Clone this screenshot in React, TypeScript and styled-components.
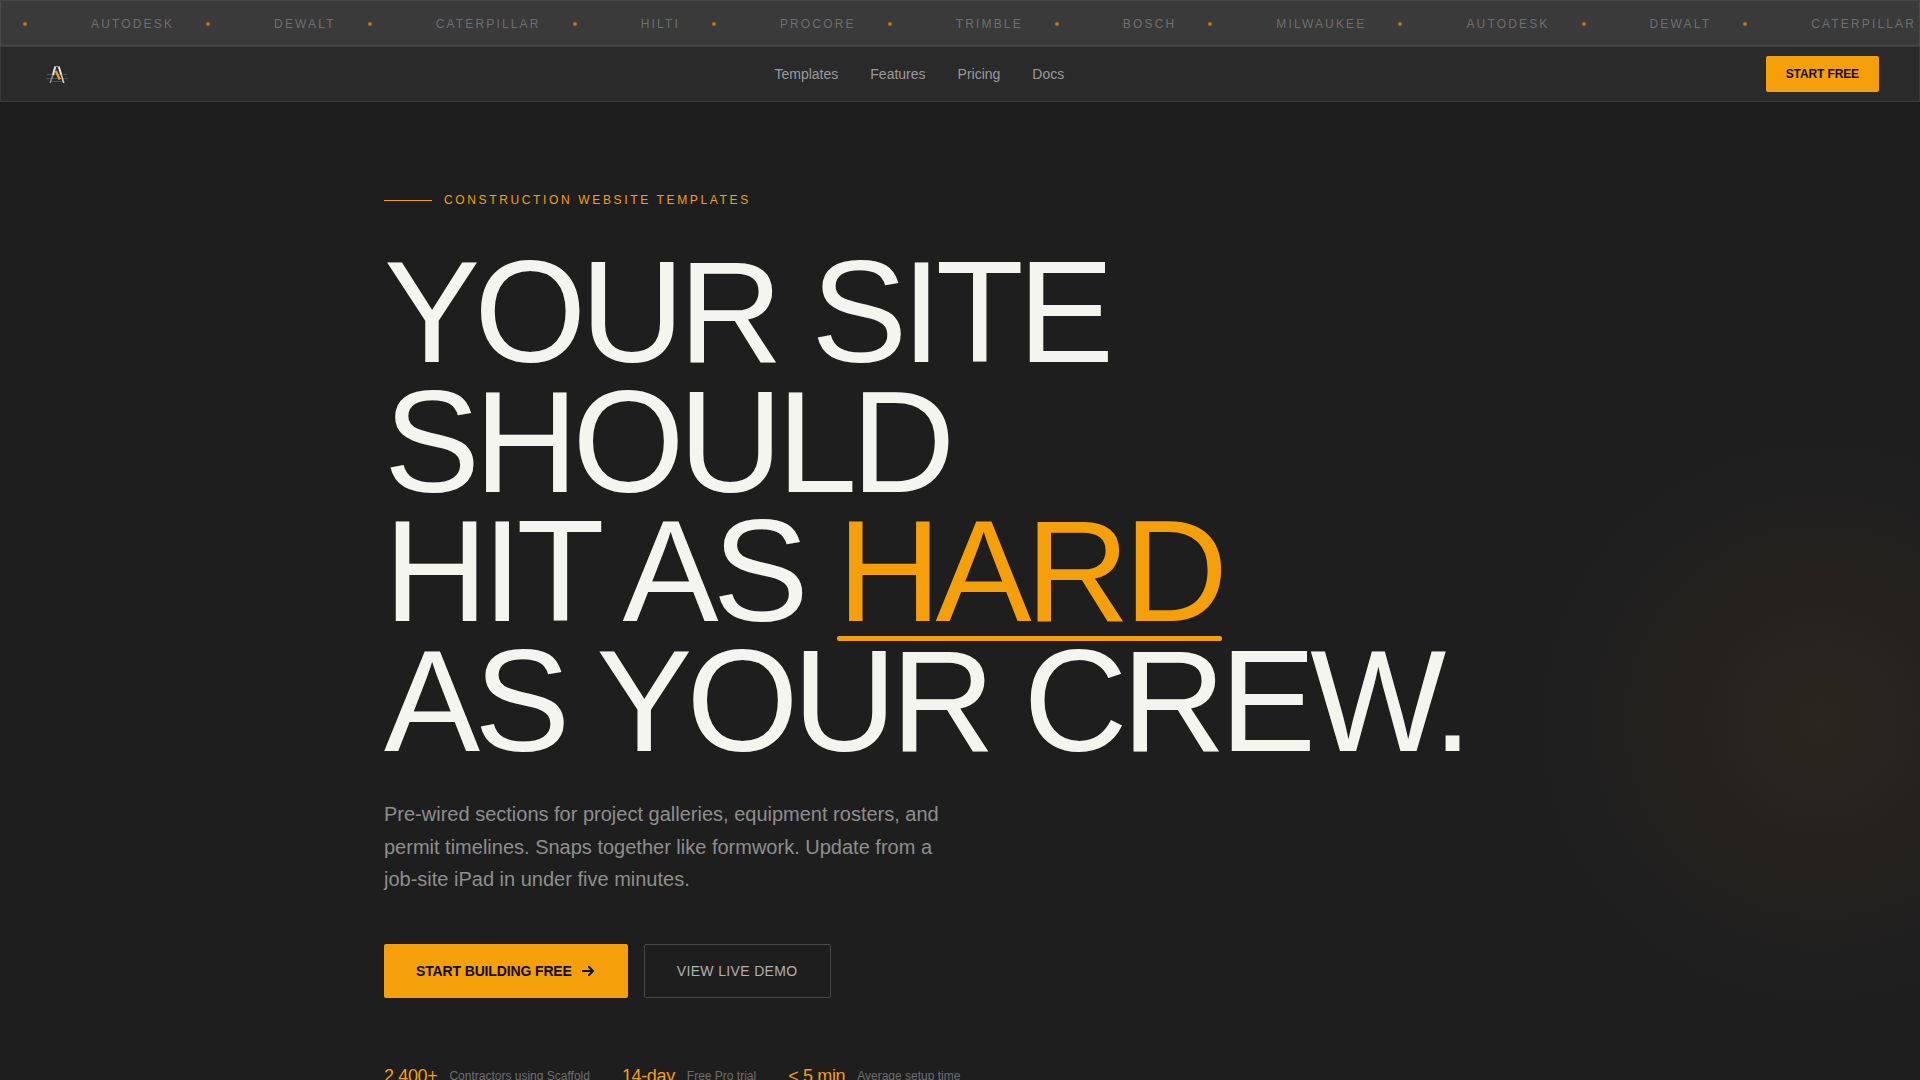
import React from "react";
import styled, { createGlobalStyle } from "styled-components";

const color = {
  ink: "#1e1e1f",
  panel: "#2a2a2b",
  steel: "#3a3a3b",
  rivet: "#48484a",
  amber: "#f59f0b",
  chalk: "#f5f5f0",
};

const GlobalStyle = createGlobalStyle`
  *, *::before, *::after { box-sizing: border-box; }
  html { background: ${color.ink}; }
  body {
    margin: 0;
    font-family: "Liberation Sans", Arial, sans-serif;
    color: ${color.chalk};
    background: ${color.ink};
  }
`;

const Page = styled.div`
  display: flex;
  flex-direction: column;
  height: 100vh;
  overflow: hidden;
`;

const Ticker = styled.div`
  display: flex;
  flex: none;
  align-items: center;
  gap: 64px;
  padding: 14px 0 12px 22px;
  overflow: hidden;
  background: ${color.steel};
  border: 1px solid ${color.rivet};
`;

const Brand = styled.span`
  display: flex;
  flex: none;
  align-items: center;
  gap: 32px;
  font-size: 12px;
  line-height: 18px;
  letter-spacing: 0.18em;
  text-transform: uppercase;
  color: #6e6e70;
`;

const Dot = styled.span`
  flex: none;
  width: 4px;
  height: 4px;
  border-radius: 50%;
  background: ${color.amber};
  opacity: 0.6;
`;

const Nav = styled.nav`
  display: flex;
  flex: none;
  align-items: center;
  justify-content: space-between;
  height: 56px;
  padding: 0 40px;
  background: ${color.panel};
  border: 1px solid ${color.steel};
`;

const HomeLink = styled.a`
  display: flex;
`;

const NavLinks = styled.div`
  display: flex;
  gap: 32px;
`;

const NavLink = styled.a`
  font-size: 14px;
  line-height: 20px;
  color: #9a9a9a;
  text-decoration: none;
`;

const Button = styled.button<{ $variant?: "solid" | "outline"; $size?: "small" | "large" }>`
  display: inline-flex;
  align-items: center;
  justify-content: center;
  gap: 8px;
  height: ${(p) => (p.$size === "small" ? "36px" : "54px")};
  padding: 0 ${(p) => (p.$size === "small" ? "20px" : "32px")};
  font-family: inherit;
  font-size: ${(p) => (p.$size === "small" ? "12px" : "14px")};
  font-weight: ${(p) => (p.$variant === "outline" ? 400 : 700)};
  letter-spacing: ${(p) => (p.$variant === "outline" ? "0.025em" : "-0.01em")};
  text-transform: uppercase;
  white-space: nowrap;
  color: ${(p) => (p.$variant === "outline" ? "#b0b0b0" : "#0e0e0e")};
  background: ${(p) => (p.$variant === "outline" ? "transparent" : color.amber)};
  border: ${(p) => (p.$variant === "outline" ? `1px solid ${color.rivet}` : "0")};
  border-radius: 2px;
  cursor: pointer;
`;

const Hero = styled.main`
  flex: 1;
  min-height: 0;
  padding: 89px 40px 0;
  background: radial-gradient(
    circle 288px at right 100px top 620px,
    rgba(245, 158, 11, 0.06),
    transparent
  );
`;

const HeroInner = styled.div`
  max-width: 1152px;
  margin: 0 auto;
`;

const Eyebrow = styled.p`
  display: flex;
  align-items: center;
  gap: 12px;
  margin: 0 0 39px;
  font-size: 12px;
  line-height: 18px;
  letter-spacing: 0.22em;
  text-transform: uppercase;
  color: ${color.amber};

  &::before {
    content: "";
    width: 48px;
    height: 1px;
    background: ${color.amber};
  }
`;

const Headline = styled.h1`
  margin: 0;
  font-size: 144px;
  font-weight: 400;
  line-height: 0.9;
  letter-spacing: -0.04em;
  text-transform: uppercase;
`;

const Emphasis = styled.span`
  position: relative;
  color: ${color.amber};

  &::after {
    content: "";
    position: absolute;
    left: 0;
    right: 0;
    bottom: 11px;
    height: 5px;
    border-radius: 2px;
    background: ${color.amber};
  }
`;

const Lede = styled.p`
  max-width: 576px;
  margin: 32px 0 48px;
  font-size: 20px;
  line-height: 1.625;
  color: #8e8e8e;
`;

const Actions = styled.div`
  display: flex;
  gap: 16px;
`;

const Stats = styled.dl`
  display: flex;
  gap: 32px;
  margin: 64px 0 0;
`;

const Stat = styled.div`
  display: flex;
  flex-direction: row-reverse;
  align-items: center;
  gap: 12px;
`;

const StatLabel = styled.dt`
  font-size: 12px;
  line-height: 18px;
  color: #6e6e70;
`;

const StatValue = styled.dd`
  margin: 0;
  font-size: 18px;
  line-height: 28px;
  letter-spacing: -0.02em;
  color: ${color.amber};
`;

const brands = [
  "Autodesk",
  "DeWalt",
  "Caterpillar",
  "Hilti",
  "Procore",
  "Trimble",
  "Bosch",
  "Milwaukee",
];

const tickerItems = [...brands, ...brands.slice(0, 3)];

const links = ["Templates", "Features", "Pricing", "Docs"];

const stats = [
  { value: "2,400+", label: "Contractors using Scaffold" },
  { value: "14-day", label: "Free Pro trial" },
  { value: "< 5 min", label: "Average setup time" },
];

function Logo() {
  return (
    <svg width="32" height="32" viewBox="0 0 32 32" fill="none" aria-hidden="true">
      <path d="M6 16.5h20M5 20.5h22M9 23.5h14" stroke="#566064" strokeWidth="0.8" />
      <path d="M14.3 8.5 12 17" stroke="#e8e8e6" strokeWidth="2" />
      <path d="M12 17 9 25" stroke="#8f9496" strokeWidth="1.4" />
      <path d="M17.7 8.5l2.5 8" stroke="#e8e8e6" strokeWidth="2" />
      <path d="M20.2 16.5l2.6 8.5" stroke="#c8c8c6" strokeWidth="1.6" />
      <path d="M13.6 8.5h4.8" stroke="#8a8a8a" strokeWidth="1.2" />
      <path d="M14.8 13l4 8.5" stroke={color.amber} strokeWidth="2.4" />
    </svg>
  );
}

function ArrowRight() {
  return (
    <svg
      width="16"
      height="16"
      viewBox="0 0 16 16"
      fill="none"
      stroke="currentColor"
      strokeWidth="2"
      strokeLinecap="round"
      strokeLinejoin="round"
      aria-hidden="true"
    >
      <path d="M3 8h10M9 4l4 4-4 4" />
    </svg>
  );
}

export default function App() {
  return (
    <Page>
      <GlobalStyle />
      <Ticker>
        <Dot />
        {tickerItems.map((name, i) => (
          <Brand key={i}>
            {name}
            <Dot />
          </Brand>
        ))}
      </Ticker>
      <Nav>
        <HomeLink href="#" aria-label="Scaffold">
          <Logo />
        </HomeLink>
        <NavLinks>
          {links.map((label) => (
            <NavLink key={label} href={`#${label.toLowerCase()}`}>
              {label}
            </NavLink>
          ))}
        </NavLinks>
        <Button $size="small">Start Free</Button>
      </Nav>
      <Hero>
        <HeroInner>
          <Eyebrow>Construction Website Templates</Eyebrow>
          <Headline>
            Your site should
            <br />
            hit as <Emphasis>hard</Emphasis>
            <br />
            as your crew.
          </Headline>
          <Lede>
            Pre-wired sections for project galleries, equipment rosters, and permit timelines.
            Snaps together like formwork. Update from a job-site iPad in under five minutes.
          </Lede>
          <Actions>
            <Button>
              Start Building Free
              <ArrowRight />
            </Button>
            <Button $variant="outline">View Live Demo</Button>
          </Actions>
          <Stats>
            {stats.map((s) => (
              <Stat key={s.label}>
                <StatLabel>{s.label}</StatLabel>
                <StatValue>{s.value}</StatValue>
              </Stat>
            ))}
          </Stats>
        </HeroInner>
      </Hero>
    </Page>
  );
}
